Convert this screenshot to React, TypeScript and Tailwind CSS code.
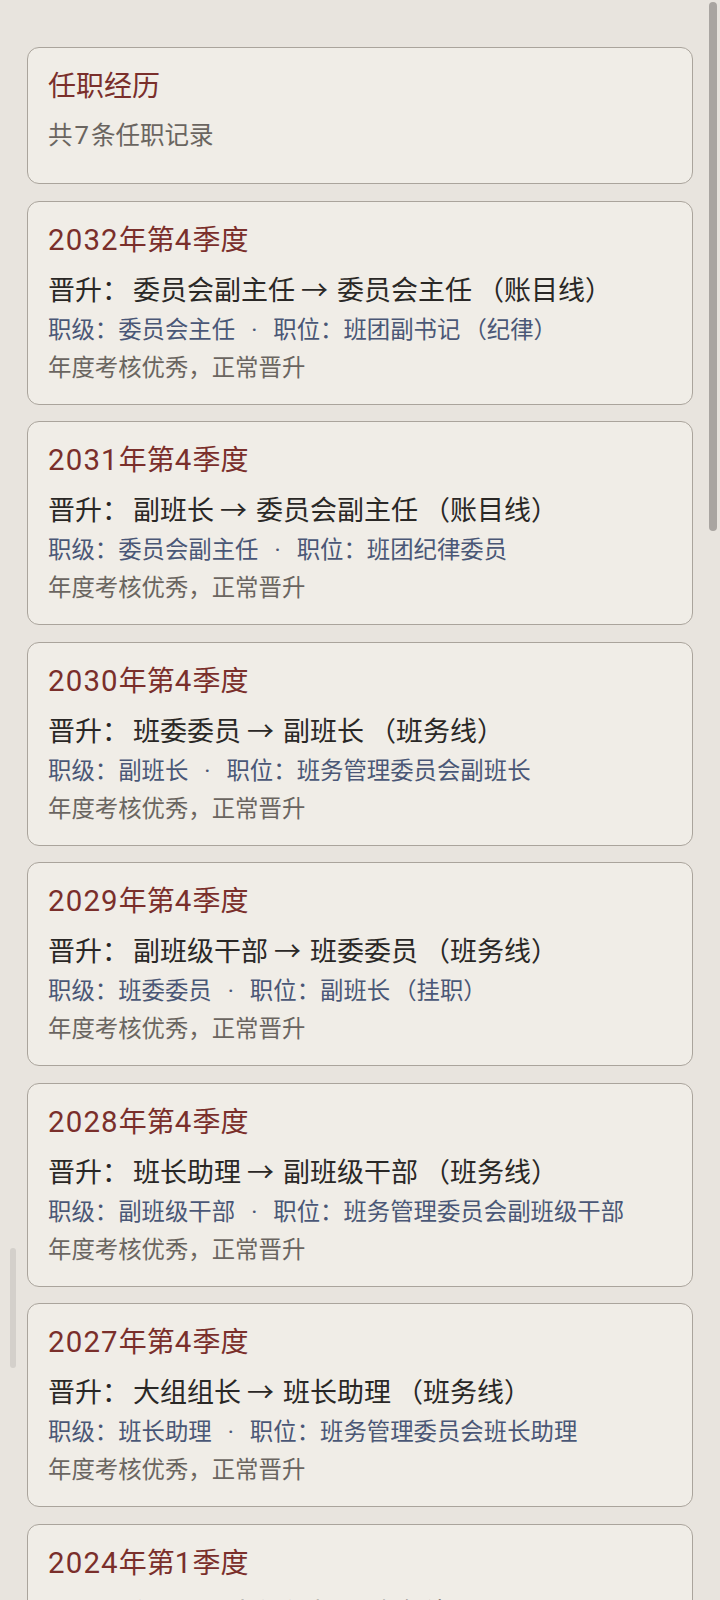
import type { ReactNode } from 'react'

type Record = {
  period: string
  from: string
  to: string
  line: string
  rank: string
  post: string
  note: string
}

const records: Record[] = [
  {
    period: '2032年第4季度',
    from: '委员会副主任',
    to: '委员会主任',
    line: '账目线',
    rank: '委员会主任',
    post: '班团副书记（纪律）',
    note: '年度考核优秀，正常晋升',
  },
  {
    period: '2031年第4季度',
    from: '副班长',
    to: '委员会副主任',
    line: '账目线',
    rank: '委员会副主任',
    post: '班团纪律委员',
    note: '年度考核优秀，正常晋升',
  },
  {
    period: '2030年第4季度',
    from: '班委委员',
    to: '副班长',
    line: '班务线',
    rank: '副班长',
    post: '班务管理委员会副班长',
    note: '年度考核优秀，正常晋升',
  },
  {
    period: '2029年第4季度',
    from: '副班级干部',
    to: '班委委员',
    line: '班务线',
    rank: '班委委员',
    post: '副班长（挂职）',
    note: '年度考核优秀，正常晋升',
  },
  {
    period: '2028年第4季度',
    from: '班长助理',
    to: '副班级干部',
    line: '班务线',
    rank: '副班级干部',
    post: '班务管理委员会副班级干部',
    note: '年度考核优秀，正常晋升',
  },
  {
    period: '2027年第4季度',
    from: '大组组长',
    to: '班长助理',
    line: '班务线',
    rank: '班长助理',
    post: '班务管理委员会班长助理',
    note: '年度考核优秀，正常晋升',
  },
  {
    period: '2024年第1季度',
    from: '组员',
    to: '大组组长',
    line: '班务线',
    rank: '大组组长',
    post: '班务管理委员会大组组长',
    note: '入职后首次任命',
  },
]

// digits come out a bit wider in the reference font
function withDigits(text: string): ReactNode[] {
  return text.split(/(\d+)/).map((part, i) =>
    /^\d+$/.test(part) ? (
      <span key={i} className="text-[1.05em] tracking-[0.04em]">
        {part}
      </span>
    ) : (
      part
    ),
  )
}

function withParen(text: string): ReactNode {
  const idx = text.indexOf('（')
  if (idx < 0) return text
  return (
    <>
      {text.slice(0, idx)}
      <span className="ml-[3px]">{text.slice(idx)}</span>
    </>
  )
}

function RecordCard({ record }: { record: Record }) {
  return (
    <div className="rounded-[12px] border border-[#aaa49c] bg-[#f0ede7] px-5 pt-[19px] pb-[20px]">
      <h3 className="text-[28px] leading-[39px] text-[#7a2f2b]">{withDigits(record.period)}</h3>
      <p className="mt-[12px] text-[27px] leading-[38px] text-[#2a2826]">
        晋升：<span className="ml-[4px]">{record.from}</span>
        <span className="inline-block w-[42px] pl-[6px]">→</span>
        {record.to}
        <span className="ml-[5px]">（{record.line}）</span>
      </p>
      <p className="mt-[4px] text-[23.4px] leading-[32px] text-[#4a5776]">
        职级：{record.rank}
        <span className="mx-[16px]">·</span>
        职位：{withParen(record.post)}
      </p>
      <p className="mt-[6px] text-[23.4px] leading-[32px] text-[#6a6560]">{record.note}</p>
    </div>
  )
}

export default function App() {
  return (
    <div className="relative min-h-[1600px] overflow-hidden bg-[#e8e4de] font-['Roboto','Noto_Sans_CJK_SC',sans-serif]">
      <div className="flex flex-col gap-[16.5px] px-[27px] pt-[47px]">
        <div className="rounded-[12px] border border-[#aaa49c] bg-[#f0ede7] px-5 pt-[19px] pb-[30px]">
          <h2 className="text-[28px] leading-[39px] text-[#7a2f2b]">任职经历</h2>
          <p className="mt-[12px] text-[24.5px] leading-[34px] text-[#6a6560]">
            共<span className="px-[2px] text-[1.05em]">7</span>条任职记录
          </p>
        </div>

        {records.map((record) => (
          <RecordCard key={record.period} record={record} />
        ))}
      </div>

      {/* scroll indicators */}
      <div className="absolute right-[3px] top-[2px] h-[529px] w-[8px] rounded-full bg-[#a9a5a1]" />
      <div className="absolute left-[10px] top-[1248px] h-[120px] w-[6px] rounded-full bg-[#d4d0cb]" />
    </div>
  )
}
